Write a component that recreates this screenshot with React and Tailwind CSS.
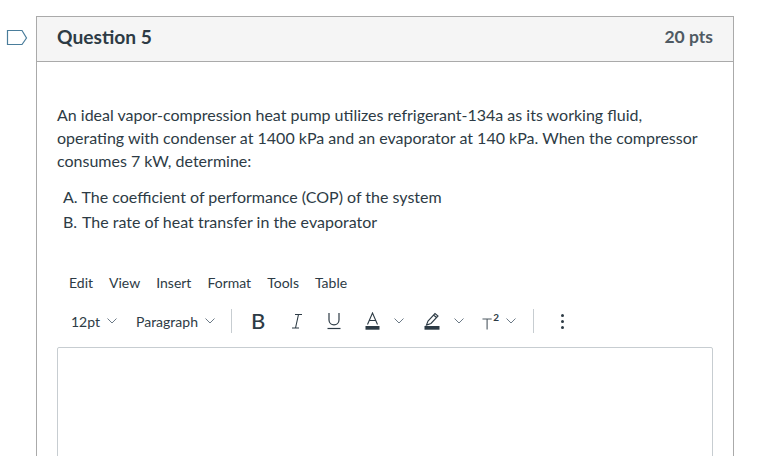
const Chevron = ({ className = '' }) => (
  <svg width="10" height="6" viewBox="0 0 10 6" fill="none" stroke="#5b6b79" strokeWidth="0.9" className={className}>
    <path d="M0.5 0.5 L5 5 L9.5 0.5" />
  </svg>
);

function Toolbar() {
  return (
    <div className="flex items-center h-[38px] text-[#2d3b45]">
      <div className="flex items-center w-[65px] pl-[14px] text-[14px] text-[#2d3b45]">
        <span>12pt</span>
        <Chevron className="ml-[7px]" />
      </div>
      <div className="flex items-center w-[95px] pl-[14px] text-[14px] text-[#2d3b45]">
        <span>Paragraph</span>
        <Chevron className="ml-[7px]" />
      </div>
      <div className="w-px h-6 bg-[#c7cdd1] ml-[14px]" />
      <span className="ml-[19px] w-[16px] text-[22px] leading-none font-medium text-[#2d3b45]">B</span>
      <svg width="14" height="18" viewBox="0 0 14 18" fill="none" stroke="#2d3b45" strokeWidth="1.1" className="ml-[23px]">
        <path d="M5 2.5 H12 M2 16 H9 M8.5 2.5 L5.5 16" />
      </svg>
      <svg width="14" height="18" viewBox="0 0 14 18" fill="none" stroke="#2d3b45" className="ml-[23px]">
        <path d="M2 1 V8 C2 14.5 12 14.5 12 8 V1" strokeWidth="1.2" />
        <path d="M0.5 16.5 H13.5" strokeWidth="1.2" />
      </svg>
      <svg width="15" height="18" viewBox="0 0 15 18" fill="none" className="ml-[24px]">
        <path d="M2.5 12.5 L7.5 1 L12.5 12.5 M4 8.5 H11" stroke="#2d3b45" strokeWidth="1.1" />
        <rect x="0.5" y="14" width="14" height="3.7" fill="#2d3b45" />
      </svg>
      <Chevron className="ml-[14px]" />
      <svg width="16" height="18" viewBox="0 0 16 18" fill="none" className="ml-[20px]">
        <path d="M2.5 13 L4 9 L11 1.5 L14 4 L7 11.5 Z M9.5 3 L12.5 5.5" stroke="#2d3b45" strokeWidth="1.1" />
        <rect x="0.5" y="14" width="15" height="3.7" fill="#2d3b45" />
      </svg>
      <Chevron className="ml-[14px]" />
      <div className="ml-[18px] flex items-start w-[17px] h-[18px]">
        <svg width="11" height="12" viewBox="0 0 11 12" fill="none" className="mt-[6px]">
          <path d="M0.5 0.6 H10.5 M5.5 0.6 V12" stroke="#4f5a63" strokeWidth="1.2" />
        </svg>
        <span className="ml-px text-[10px] leading-[10px] font-bold text-[#2d3b45]">2</span>
      </div>
      <Chevron className="ml-[7px]" />
      <div className="w-px h-6 bg-[#c7cdd1] ml-[17px]" />
      <div className="ml-[27px] flex flex-col gap-[3px]">
        <div className="w-[3px] h-[3px] rounded-full bg-[#2d3b45]" />
        <div className="w-[3px] h-[3px] rounded-full bg-[#2d3b45]" />
        <div className="w-[3px] h-[3px] rounded-full bg-[#2d3b45]" />
      </div>
    </div>
  );
}

export default function App() {
  return (
    <div className="relative h-[456px] w-[773px] overflow-hidden bg-white pt-4 pl-9" style={{ fontFamily: 'Lato, sans-serif' }}>
      <svg width="22" height="18" viewBox="0 0 22 18" fill="none" className="absolute left-[6px] top-[29px]">
        <path d="M1.5 1.5 H16 L20.5 9 L16 15.5 H1.5 Z" stroke="#4a7d9b" strokeWidth="1.2" />
      </svg>

      <div className="w-[698px] h-[460px] border border-[#aaaaaa] border-b-0">
        <div className="flex items-center justify-between h-[45px] bg-[#f5f5f5] border-b border-[#aaaaaa] pl-5 pr-5 pb-1">
          <h2 className="text-[19.2px] font-bold text-[#2d3b45] leading-none">Question 5</h2>
          <span className="text-[17.5px] font-bold text-[#4f5a63]">20 pts</span>
        </div>

        <div className="px-5 pt-[41px]">
          <p className="text-[16px] leading-[23px] text-[#2d3b45]">
            An ideal vapor-compression heat pump utilizes refrigerant-134a as its working fluid,<br />
            operating with condenser at 1400 kPa and an evaporator at 140 kPa. When the compressor<br />
            consumes 7 kW, determine:
          </p>
          <ol className="mt-[13px] pl-[6px] text-[16px] leading-[24px] text-[#2d3b45]">
            <li className="flex"><span className="w-[18.5px]">A.</span><span>The coefficient of performance (COP) of the system</span></li>
            <li className="flex mt-px"><span className="w-[19px]">B.</span><span>The rate of heat transfer in the evaporator</span></li>
          </ol>

          <div className="mt-[39px] flex items-center gap-4 pl-3 text-[14px] leading-5 text-[#2d3b45]">
            <span>Edit</span>
            <span>View</span>
            <span>Insert</span>
            <span>Format</span>
            <span>Tools</span>
            <span>Table</span>
          </div>
          <div className="mt-[9px]">
            <Toolbar />
          </div>
          <div className="mt-[7px] h-[120px] border border-[#c7cdd1] rounded-[2px]" />
        </div>
      </div>
    </div>
  );
}
